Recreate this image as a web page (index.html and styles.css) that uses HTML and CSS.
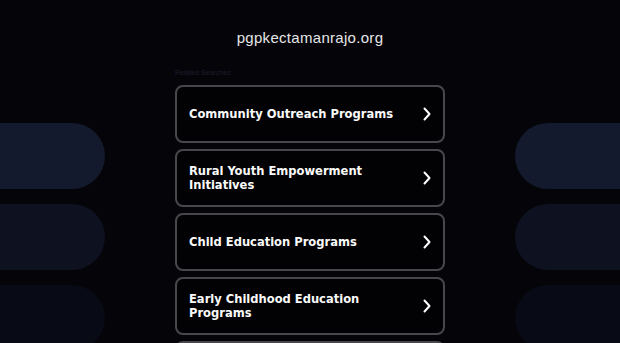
FILE: index.html
```html
<!DOCTYPE html>
<html lang="en">
<head>
  <meta charset="UTF-8" />
  <meta name="viewport" content="width=device-width, initial-scale=1.0"/>
  <title>pgpkectamanrajo.org</title>
  <link rel="stylesheet" href="styles.css">
</head>
<body>

  <div class="page">
    <div class="side side-left">
      <div class="pill pill-1"></div>
      <div class="pill pill-2"></div>
      <div class="pill pill-3"></div>
    </div>

    <div class="main">
      <h1 class="domain">pgpkectamanrajo.org</h1>

      <div class="related">
        <div class="related-title">Related Searches</div>

        <a class="link-card" href="#">
          <span class="link-text">Community Outreach Programs</span>
          <svg class="chevron" viewBox="0 0 8 14" width="8" height="14"><path d="M1.5 1.5 L6.5 7 L1.5 12.5" fill="none" stroke="#fff" stroke-width="2" stroke-linecap="round" stroke-linejoin="round"/></svg>
        </a>
        <a class="link-card" href="#">
          <span class="link-text">Rural Youth Empowerment Initiatives</span>
          <svg class="chevron" viewBox="0 0 8 14" width="8" height="14"><path d="M1.5 1.5 L6.5 7 L1.5 12.5" fill="none" stroke="#fff" stroke-width="2" stroke-linecap="round" stroke-linejoin="round"/></svg>
        </a>
        <a class="link-card" href="#">
          <span class="link-text">Child Education Programs</span>
          <svg class="chevron" viewBox="0 0 8 14" width="8" height="14"><path d="M1.5 1.5 L6.5 7 L1.5 12.5" fill="none" stroke="#fff" stroke-width="2" stroke-linecap="round" stroke-linejoin="round"/></svg>
        </a>
        <a class="link-card" href="#">
          <span class="link-text">Early Childhood Education Programs</span>
          <svg class="chevron" viewBox="0 0 8 14" width="8" height="14"><path d="M1.5 1.5 L6.5 7 L1.5 12.5" fill="none" stroke="#fff" stroke-width="2" stroke-linecap="round" stroke-linejoin="round"/></svg>
        </a>
        <a class="link-card" href="#">
          <span class="link-text">Volunteer Opportunities</span>
          <svg class="chevron" viewBox="0 0 8 14" width="8" height="14"><path d="M1.5 1.5 L6.5 7 L1.5 12.5" fill="none" stroke="#fff" stroke-width="2" stroke-linecap="round" stroke-linejoin="round"/></svg>
        </a>
      </div>
    </div>

    <div class="side side-right">
      <div class="pill pill-1"></div>
      <div class="pill pill-2"></div>
      <div class="pill pill-3"></div>
    </div>
  </div>

</body>
</html>
```

FILE: styles.css
```css
* {
  box-sizing: border-box;
  margin: 0;
  padding: 0;
}

html, body {
  height: 100%;
  overflow: hidden;
}

body {
  background-color: #050509;
  font-family: 'DejaVu Sans', sans-serif;
}

.page {
  display: grid;
  grid-template-columns: 105px 1fr 105px;
  min-height: 100vh;
}

.side {
  display: flex;
  flex-direction: column;
  gap: 15px;
  padding-top: 123px;
}

.pill {
  height: 66px;
}

.side-left .pill {
  border-radius: 0 33px 33px 0;
}

.side-right .pill {
  border-radius: 33px 0 0 33px;
}

.pill-1 { background-color: #141a2e; }
.pill-2 { background-color: #0d1120; }
.pill-3 { background-color: #080a15; }

.main {
  display: flex;
  flex-direction: column;
  align-items: center;
}

.domain {
  font-family: 'Liberation Sans', Arial, sans-serif;
  font-size: 15px;
  font-weight: normal;
  color: #e6e6e8;
  margin-top: 29px;
  line-height: 17px;
  letter-spacing: 0.3px;
}

.related {
  width: 270px;
  margin-top: 22px;
}

.related-title {
  font-family: 'Liberation Sans', Arial, sans-serif;
  font-size: 7px;
  line-height: 9px;
  color: #1c1d2c;
  margin-bottom: 8px;
}

.link-card {
  display: flex;
  align-items: center;
  justify-content: space-between;
  height: 58px;
  margin-bottom: 6px;
  padding: 0 12px 0 12px;
  border: 2px solid #48484c;
  border-radius: 8px;
  background-color: #020204;
  text-decoration: none;
}

.link-text {
  color: #fafafa;
  font-family: 'DejaVu Sans Condensed', 'DejaVu Sans', sans-serif;
  font-stretch: condensed;
  font-size: 12.8px;
  font-weight: bold;
  line-height: 14px;
  max-width: 215px;
}

.chevron {
  flex-shrink: 0;
}
```
